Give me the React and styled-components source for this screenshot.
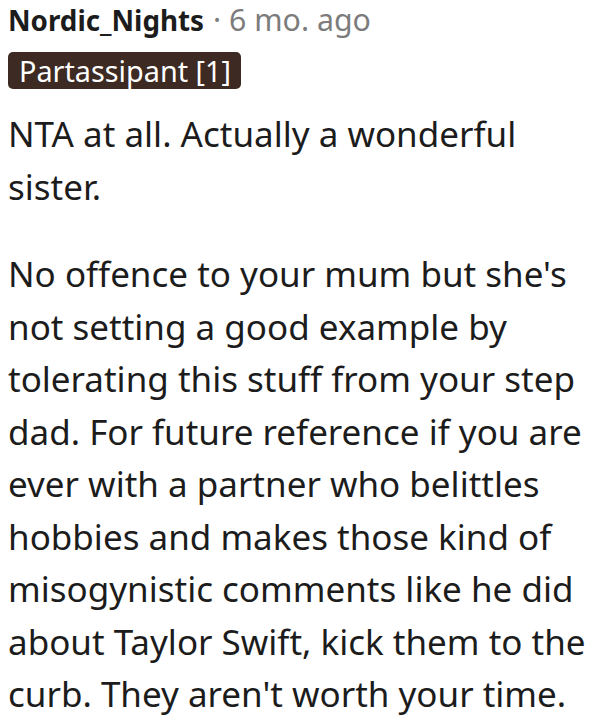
import React from 'react'
import styled, { createGlobalStyle } from 'styled-components'

const GlobalStyle = createGlobalStyle`
  body {
    margin: 0;
    background: #ffffff;
    font-family: 'Noto Sans', 'Open Sans', sans-serif;
  }
`

const Comment = styled.div`
  padding: 0 0 0 8px;
  width: 593px;
  box-sizing: border-box;
`

const Meta = styled.div`
  display: flex;
  align-items: baseline;
  height: 39px;
  line-height: 39px;
  white-space: nowrap;
`

const Author = styled.span`
  font-size: 27.8px;
  font-weight: 700;
  color: #1c1c1c;
`

const Age = styled.span`
  font-size: 30.3px;
  color: #7c7c7c;
  margin-left: 9px;
`

const Flair = styled.span`
  display: inline-block;
  margin-top: 13px;
  padding: 0 10px 0 11px;
  height: 37px;
  line-height: 37px;
  border-radius: 5px;
  background: #3d2a22;
  color: #ffffff;
  font-size: 28.8px;
`

const Body = styled.div`
  margin-top: 19px;
  color: #1c1c1c;
  font-size: 35px;
  line-height: 52.5px;

  p {
    margin: 0 0 35px;
  }
`

const App = () => (
  <>
    <GlobalStyle />
    <Comment>
      <Meta>
        <Author>Nordic_Nights</Author>
        <Age>· 6 mo. ago</Age>
      </Meta>
      <Flair>Partassipant [1]</Flair>
      <Body>
        <p>NTA at all. Actually a wonderful sister.</p>
        <p>
          No offence to your mum but she's not setting a good example by tolerating this stuff from your step dad. For
          future reference if you are ever with a partner who belittles hobbies and makes those kind of misogynistic
          comments like he did about Taylor Swift, kick them to the curb. They aren't worth your time.
        </p>
      </Body>
    </Comment>
  </>
)

export default App
